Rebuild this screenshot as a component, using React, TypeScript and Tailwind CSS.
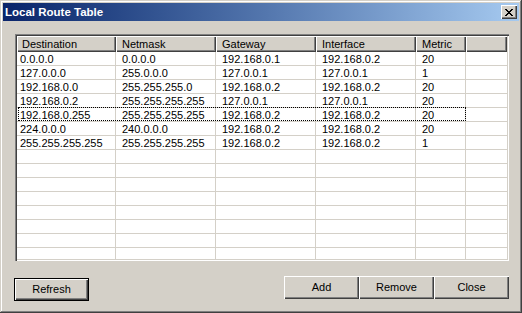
const columns = [
  { label: "Destination", width: "w-[99px]", first: true },
  { label: "Netmask", width: "w-[100px]" },
  { label: "Gateway", width: "w-[100px]" },
  { label: "Interface", width: "w-[100px]" },
  { label: "Metric", width: "w-[50px]" },
];

const routes = [
  ["0.0.0.0", "0.0.0.0", "192.168.0.1", "192.168.0.2", "20"],
  ["127.0.0.0", "255.0.0.0", "127.0.0.1", "127.0.0.1", "1"],
  ["192.168.0.0", "255.255.255.0", "192.168.0.2", "192.168.0.2", "20"],
  ["192.168.0.2", "255.255.255.255", "127.0.0.1", "127.0.0.1", "20"],
  ["192.168.0.255", "255.255.255.255", "192.168.0.2", "192.168.0.2", "20"],
  ["224.0.0.0", "240.0.0.0", "192.168.0.2", "192.168.0.2", "20"],
  ["255.255.255.255", "255.255.255.255", "192.168.0.2", "192.168.0.2", "1"],
];

const FOCUSED = 4;
const rows: string[][] = [...routes, ...Array.from({ length: 8 }, () => ["", "", "", "", ""])];

function CloseGlyph() {
  return (
    <svg width="8" height="7" viewBox="0 0 8 7" shapeRendering="crispEdges">
      <path
        fill="#000"
        d="M0 0h2v1h-2zM6 0h2v1h-2zM1 1h2v1h-2zM5 1h2v1h-2zM2 2h4v1h-4zM3 3h2v1h-2zM2 4h4v1h-4zM1 5h2v1h-2zM5 5h2v1h-2zM0 6h2v1h-2zM6 6h2v1h-2z"
      />
    </svg>
  );
}

function Button({ label, isDefault = false }: { label: string; isDefault?: boolean }) {
  return (
    <button
      className={
        isDefault
          ? "w-[75px] h-[23px] bg-[#d4d0c8] border border-black shadow-[inset_1px_1px_#ffffff,inset_-1px_-1px_#404040,inset_-2px_-2px_#808080] text-[11px] text-black"
          : "w-[75px] h-[23px] bg-[#d4d0c8] shadow-[inset_1px_1px_#ffffff,inset_-1px_-1px_#404040,inset_-2px_-2px_#808080] text-[11px] text-black"
      }
    >
      {label}
    </button>
  );
}

export default function App() {
  return (
    <div className="w-[522px] h-[313px] bg-[#d4d0c8] p-[3px] flex flex-col shadow-[inset_-1px_-1px_#404040,inset_1px_1px_#d4d0c8,inset_-2px_-2px_#808080,inset_2px_2px_#ffffff] font-['Liberation_Sans',Arial,sans-serif] text-black">
      <div className="h-[18px] flex items-center justify-between pl-[2px] pr-[2px] bg-linear-to-r from-[#0a246a] to-[#a6caf0]">
        <span className="text-white font-bold text-[11.5px] leading-[18px]">Local Route Table</span>
        <div className="w-[16px] h-[14px] bg-[#d4d0c8] flex items-center justify-center shadow-[inset_1px_1px_#ffffff,inset_-1px_-1px_#404040,inset_-2px_-2px_#808080]">
          <CloseGlyph />
        </div>
      </div>

      <div className="flex-1 flex flex-col pt-[13px] pl-[12px] pr-[10px]">
        <div className="h-[227px] p-[2px] bg-white shadow-[inset_1px_1px_#808080,inset_2px_2px_#404040,inset_-1px_-1px_#ffffff,inset_-2px_-2px_#d4d0c8]">
          <div className="h-full flex flex-col overflow-hidden text-[11px]">
            <div className="h-[16px] flex shrink-0">
              {columns.map((c) => (
                <div
                  key={c.label}
                  className={`${c.width} ${c.first ? "pl-[5px]" : "pl-[6px]"} shrink-0 bg-[#d4d0c8] leading-[16px] shadow-[inset_1px_1px_#ffffff,inset_-1px_-1px_#404040,inset_-2px_-2px_#808080]`}
                >
                  {c.label}
                </div>
              ))}
              <div className="flex-1 bg-[#d4d0c8] shadow-[inset_1px_1px_#ffffff,inset_-1px_-1px_#404040,inset_-2px_-2px_#808080]" />
            </div>

            {rows.map((r, i) => (
              <div key={i} className="h-[14px] flex shrink-0 border-b border-[#d4d0c8]">
                <div className="relative flex">
                  {r.map((v, j) => (
                    <div
                      key={j}
                      className={`${columns[j].width} ${j === 0 ? "pl-[3px]" : "pl-[6px]"} pt-[1px] shrink-0 border-r border-[#d4d0c8] leading-[13px] whitespace-nowrap overflow-hidden`}
                    >
                      {v}
                    </div>
                  ))}
                  {i === FOCUSED && (
                    <span className="absolute left-[1px] right-0 top-[-1px] bottom-0 border border-dotted border-black" />
                  )}
                </div>
                <div className="flex-1" />
              </div>
            ))}
          </div>
        </div>

        <div className="mt-[15px] flex">
          <div className="-ml-[1px]">
            <Button label="Refresh" isDefault />
          </div>
          <div className="ml-auto flex">
            <Button label="Add" />
            <Button label="Remove" />
            <Button label="Close" />
          </div>
        </div>
      </div>
    </div>
  );
}
